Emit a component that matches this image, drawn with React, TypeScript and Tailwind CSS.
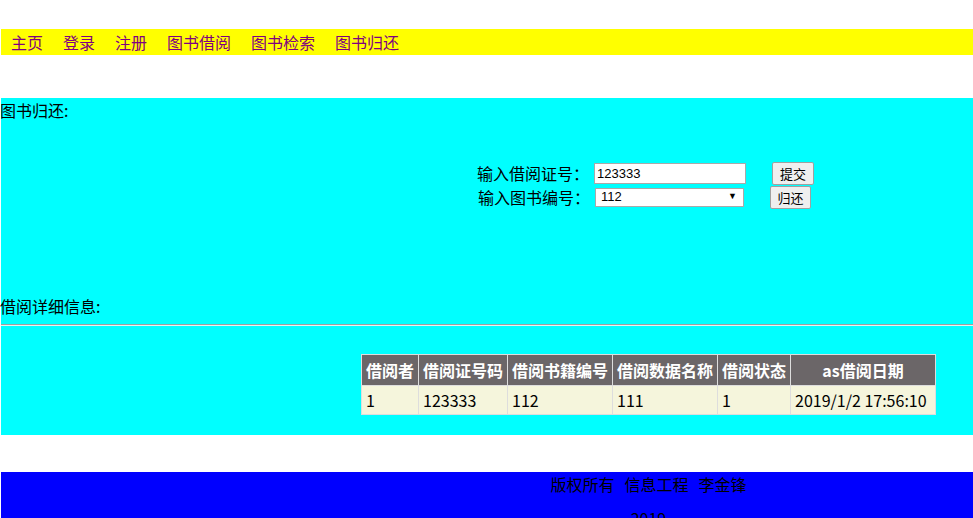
const navItems = ["主页", "登录", "注册", "图书借阅", "图书检索", "图书归还"];

const cols = [
  { title: "借阅者", w: "w-[57px]", value: "1" },
  { title: "借阅证号码", w: "w-[89px]", value: "123333" },
  { title: "借阅书籍编号", w: "w-[105px]", value: "112" },
  { title: "借阅数据名称", w: "w-[105px]", value: "111" },
  { title: "借阅状态", w: "w-[73px]", value: "1" },
  { title: "as借阅日期", w: "w-[145px]", value: "2019/1/2 17:56:10" },
];

const App = () => {
  return (
    <div className="w-[973px] h-[518px] overflow-hidden bg-white">
      <div className="w-[1296px] pl-px pt-[29px] text-[16px] text-black font-['Noto_Sans_CJK_SC',sans-serif]">
        {/* nav */}
        <nav className="h-[26px] bg-[#ffff00] flex flex-row items-center">
          {navItems.map((item) => (
            <span key={item} className="px-[10px] text-[#800080] leading-[26px]">
              {item}
            </span>
          ))}
        </nav>

        {/* return panel */}
        <section className="mt-[43px] bg-[#00ffff] pb-[20px]">
          <div className="h-6 leading-6 -ml-px">图书归还:</div>

          <div className="mt-[39px] ml-[476px] flex flex-col">
            <div className="h-6 flex flex-row items-center">
              <span className="w-[117px] leading-6">输入借阅证号：</span>
              <input
                readOnly
                defaultValue="123333"
                className="w-[152px] h-[21px] border border-[#a9a9a9] bg-white px-[2px] text-[13px] font-['Liberation_Sans',sans-serif] outline-none"
              />
              <button className="ml-[26px] w-[42px] h-[23px] border border-[#a0a0a0] rounded-[2px] bg-[#efefef] text-[13px] leading-[21px]">
                提交
              </button>
            </div>
            <div className="h-6 flex flex-row items-center ml-px">
              <span className="w-[117px] leading-6">输入图书编号：</span>
              <div className="w-[149px] h-[19px] border border-[#a9a9a9] bg-white pl-[5px] pr-[6px] flex flex-row items-center justify-between text-[13px] font-['Liberation_Sans',sans-serif]">
                <span>112</span>
                <span className="text-[9px]">▼</span>
              </div>
              <button className="ml-[26px] w-[41px] h-[23px] border border-[#a0a0a0] rounded-[2px] bg-[#efefef] text-[13px] leading-[21px]">
                归还
              </button>
            </div>
          </div>

          <div className="mt-[85px] h-6 leading-6 -ml-px">借阅详细信息:</div>
          <div className="mt-[6px] h-0 border-t border-t-[#a0a0a0] border-b border-b-[#eeeeee]"></div>

          {/* detail table */}
          <table className="mt-7 ml-[360px] table-fixed border-collapse w-[574px]">
            <thead>
              <tr className="h-[31px] bg-[#6b6668]">
                {cols.map((c) => (
                  <th
                    key={c.title}
                    className={`${c.w} border border-[#dddddd] px-1 text-white font-bold text-center whitespace-nowrap leading-5`}
                  >
                    {c.title}
                  </th>
                ))}
              </tr>
            </thead>
            <tbody>
              <tr className="h-[29px] bg-[#f5f5dc]">
                {cols.map((c) => (
                  <td
                    key={c.title}
                    className="border border-[#dddddd] px-1 text-left whitespace-nowrap leading-5"
                  >
                    {c.value}
                  </td>
                ))}
              </tr>
            </tbody>
          </table>
        </section>

        {/* footer */}
        <footer className="mt-[37px] h-[120px] bg-[#0000ff] text-center">
          <div className="h-6 leading-6">
            版权所有<span className="inline-block w-[10px]"></span>信息工程
            <span className="inline-block w-[10px]"></span>李金锋
          </div>
          <div className="mt-[10px] h-6 leading-6">2019</div>
        </footer>
      </div>
    </div>
  );
};

export default App;
